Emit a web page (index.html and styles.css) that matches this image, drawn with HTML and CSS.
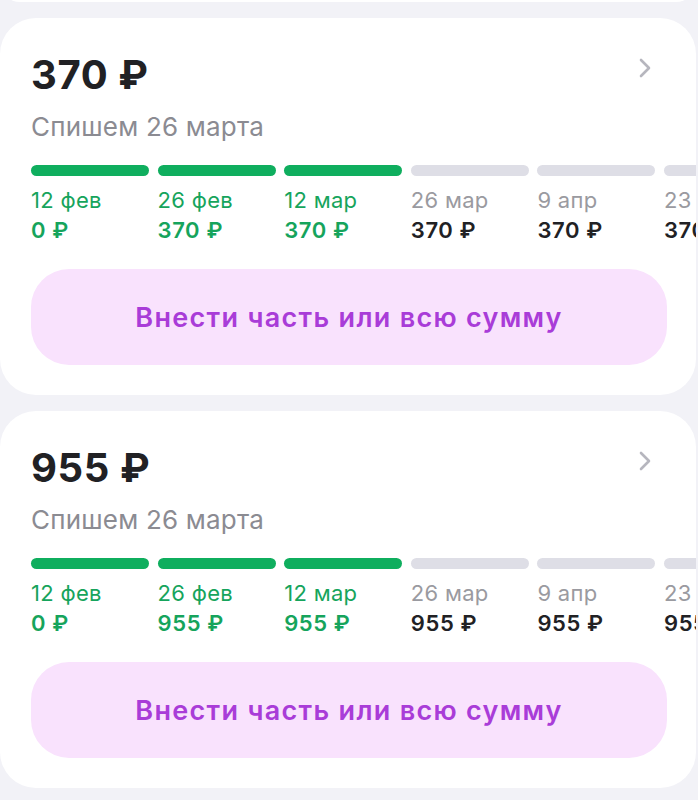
FILE: index.html
```html
<!DOCTYPE html>
<html lang="ru">

<head>
    <meta name="viewport" content="width=device-width, initial-scale=1.0" />
    <title>Платежи</title>
    <link rel="stylesheet" href="styles.css">
</head>

<body>
    <div class="list">
        <div class="card card-stub"></div>

        <div class="card">
            <div class="card-head">
                <div class="amount">370 ₽</div>
                <svg class="chevron" width="14" height="22" viewBox="0 0 14 22">
                    <path d="M3 3 L11 11 L3 19" fill="none" stroke="#b6b6be" stroke-width="2.6" stroke-linecap="round" stroke-linejoin="round" />
                </svg>
            </div>
            <div class="due">Спишем 26 марта</div>

            <div class="timeline">
                <div class="step done">
                    <div class="bar"></div>
                    <div class="date">12 фев</div>
                    <div class="sum">0 ₽</div>
                </div>
                <div class="step done">
                    <div class="bar"></div>
                    <div class="date">26 фев</div>
                    <div class="sum">370 ₽</div>
                </div>
                <div class="step done">
                    <div class="bar"></div>
                    <div class="date">12 мар</div>
                    <div class="sum">370 ₽</div>
                </div>
                <div class="step">
                    <div class="bar"></div>
                    <div class="date">26 мар</div>
                    <div class="sum">370 ₽</div>
                </div>
                <div class="step">
                    <div class="bar"></div>
                    <div class="date">9 апр</div>
                    <div class="sum">370 ₽</div>
                </div>
                <div class="step">
                    <div class="bar"></div>
                    <div class="date">23 апр</div>
                    <div class="sum">370 ₽</div>
                </div>
            </div>

            <button class="pay-btn">Внести часть или всю сумму</button>
        </div>

        <div class="card">
            <div class="card-head">
                <div class="amount">955 ₽</div>
                <svg class="chevron" width="14" height="22" viewBox="0 0 14 22">
                    <path d="M3 3 L11 11 L3 19" fill="none" stroke="#b6b6be" stroke-width="2.6" stroke-linecap="round" stroke-linejoin="round" />
                </svg>
            </div>
            <div class="due">Спишем 26 марта</div>

            <div class="timeline">
                <div class="step done">
                    <div class="bar"></div>
                    <div class="date">12 фев</div>
                    <div class="sum">0 ₽</div>
                </div>
                <div class="step done">
                    <div class="bar"></div>
                    <div class="date">26 фев</div>
                    <div class="sum">955 ₽</div>
                </div>
                <div class="step done">
                    <div class="bar"></div>
                    <div class="date">12 мар</div>
                    <div class="sum">955 ₽</div>
                </div>
                <div class="step">
                    <div class="bar"></div>
                    <div class="date">26 мар</div>
                    <div class="sum">955 ₽</div>
                </div>
                <div class="step">
                    <div class="bar"></div>
                    <div class="date">9 апр</div>
                    <div class="sum">955 ₽</div>
                </div>
                <div class="step">
                    <div class="bar"></div>
                    <div class="date">23 апр</div>
                    <div class="sum">955 ₽</div>
                </div>
            </div>

            <button class="pay-btn">Внести часть или всю сумму</button>
        </div>
    </div>
</body>

</html>
```

FILE: styles.css
```css
body {
    margin: 0;
    font-family: Inter, "Noto Sans", sans-serif;
    background-color: #f2f2f7;
    color: #212124;
}

.list {
    display: flex;
    flex-direction: column;
    gap: 15px;
    width: 696px;
}

.card {
    background-color: #fff;
    border-radius: 36px;
    padding: 32px 0 30px 31px;
    overflow: hidden;
}

.card-stub {
    height: 40px;
    padding: 0;
    margin-top: -38px;
}

.card + .card {
    margin-top: 1px;
}

.card-head {
    display: flex;
    justify-content: space-between;
    align-items: flex-start;
    padding-right: 44px;
}

.amount {
    font-size: 40px;
    line-height: 50px;
    font-weight: 700;
    letter-spacing: 0.6px;
}

.chevron {
    margin-top: 7px;
}

.due {
    margin-top: 12px;
    font-size: 26px;
    line-height: 30px;
    letter-spacing: 0.2px;
    color: #8b8b92;
}

.timeline {
    display: flex;
    gap: 8.6px;
    margin-top: 23px;
}

.step {
    flex: 0 0 118px;
    white-space: nowrap;
}

.bar {
    height: 11px;
    border-radius: 6px;
    background-color: #dedee6;
    margin-bottom: 9px;
}

.date {
    font-size: 22px;
    line-height: 30px;
    letter-spacing: 0.3px;
    color: #9a9aa0;
}

.sum {
    font-size: 22px;
    line-height: 30px;
    font-weight: 600;
    letter-spacing: 0.6px;
    color: #212124;
}

.step.done .bar {
    background-color: #0fae5e;
}

.step.done .date,
.step.done .sum {
    color: #16a45c;
}

.pay-btn {
    display: block;
    width: 636px;
    height: 96px;
    margin-top: 24px;
    border: none;
    border-radius: 38px;
    background-color: #f9e2fd;
    color: #a93cd8;
    font-family: inherit;
    font-size: 27px;
    font-weight: 600;
    letter-spacing: 1.3px;
    cursor: pointer;
}
```
